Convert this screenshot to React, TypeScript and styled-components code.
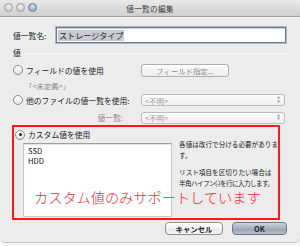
import styled, { createGlobalStyle } from 'styled-components';

const GlobalStyle = createGlobalStyle`
  html, body {
    margin: 0;
    padding: 0;
    background: #f6f6f6;
  }
  * {
    box-sizing: border-box;
  }
`;

const App = () => {
  return (
    <>
      <GlobalStyle />
      <Window>
        <TitleBar>
          <Lights>
            <Light />
            <Light />
            <Light $active />
          </Lights>
          <Title>値一覧の編集</Title>
        </TitleBar>
        <Body>
          <Row $top={10} $h={16}>
            <Label $w={43}>値一覧名:</Label>
            <NameInput>
              <Selected>ストレージタイプ</Selected>
            </NameInput>
          </Row>
          <Row $top={2} $h={14}>
            <Label $w={11}>値</Label>
            <Rule />
          </Row>
          <Row $top={4} $h={14}>
            <RadioLabel $w={128}>
              <Radio />
              フィールドの値を使用
            </RadioLabel>
            <PushButton>フィールド指定...</PushButton>
          </Row>
          <Row $top={1} $h={14}>
            <Undefined>「&lt;未定義&gt;」</Undefined>
          </Row>
          <Row $top={1} $h={14}>
            <RadioLabel $w={128}>
              <Radio />
              他のファイルの値一覧を使用:
            </RadioLabel>
            <Select>
              &lt;不明&gt;
              <Arrows>
                <span>▲</span>
                <span>▼</span>
              </Arrows>
            </Select>
          </Row>
          <Row $top={4} $h={13}>
            <Label $w={128} $dim $right>
              値一覧:
            </Label>
            <Select>
              &lt;不明&gt;
              <Arrows>
                <span>▲</span>
                <span>▼</span>
              </Arrows>
            </Select>
          </Row>
          <CustomBox>
            <RadioLabel $w={120}>
              <Radio $checked />
              カスタム値を使用
            </RadioLabel>
            <CustomBody>
              <ValueList>
                <div>SSD</div>
                <div>HDD</div>
              </ValueList>
              <Help>
                <HelpLine>各値は改行で分ける必要がありま</HelpLine>
                <HelpLine>す。</HelpLine>
                <HelpLine $gap>リスト項目を区切りたい場合は</HelpLine>
                <HelpLine $tight>半角ハイフン(-)を行に入力します。</HelpLine>
              </Help>
            </CustomBody>
            <Note>カスタム値のみサポートしています</Note>
          </CustomBox>
          <Footer>
            <Button $w={58}>キャンセル</Button>
            <Button $w={55} $primary>
              OK
            </Button>
          </Footer>
        </Body>
      </Window>
    </>
  );
};

export default App;

const Window = styled.div`
  width: 300px;
  height: 243px;
  background: #ececec;
  border-radius: 0 0 5px 5px;
  border-bottom: 1px solid #c4c4c4;
  overflow: hidden;
  font-family: 'Noto Sans CJK JP', 'Noto Sans', sans-serif;
  color: #1e1e1e;
  display: flex;
  flex-direction: column;
`;

const TitleBar = styled.div`
  position: relative;
  height: 17px;
  flex-shrink: 0;
  background: linear-gradient(#e9e9e9, #cfcfcf);
  border-bottom: 1px solid #a7a7a7;
  display: flex;
  align-items: center;
  justify-content: center;
`;

const Lights = styled.div`
  position: absolute;
  left: 4px;
  top: 3px;
  display: flex;
  gap: 3px;
`;

const Light = styled.div<{ $active?: boolean }>`
  width: 9px;
  height: 9px;
  border-radius: 50%;
  border: 1px solid ${(p) => (p.$active ? '#6f7f96' : '#9e9e9e')};
  background: ${(p) =>
    p.$active
      ? 'radial-gradient(circle at 50% 35%, #d6e0ee, #8396b4)'
      : 'radial-gradient(circle at 50% 35%, #f4f4f4, #bdbdbd)'};
`;

const Title = styled.div`
  font-size: 7.7px;
  color: #3c3c3c;
  letter-spacing: 0.2px;
`;

const Body = styled.div`
  display: flex;
  flex-direction: column;
  padding: 0 13px 0 13px;
  font-size: 7.8px;
`;

const Row = styled.div<{ $top: number; $h: number }>`
  display: flex;
  align-items: center;
  margin-top: ${(p) => p.$top}px;
  height: ${(p) => p.$h}px;
`;

const Label = styled.div<{ $w: number; $dim?: boolean; $right?: boolean }>`
  width: ${(p) => p.$w}px;
  flex-shrink: 0;
  color: ${(p) => (p.$dim ? '#8c8c8c' : '#1e1e1e')};
  text-align: ${(p) => (p.$right ? 'right' : 'left')};
  padding-right: ${(p) => (p.$right ? '18px' : '0')};
`;

const NameInput = styled.div`
  flex: 1;
  height: 16px;
  margin-right: 1px;
  background: #fff;
  border: 1px solid #6d7a8e;
  box-shadow: 0 0 0 1px #aab7c9, inset 0 1px 1px rgba(0, 0, 0, 0.2);
  display: flex;
  align-items: center;
  padding-left: 1px;
  font-size: 8.1px;
`;

const Selected = styled.span`
  background: #c9cbd0;
  padding: 0 1px;
  line-height: 11px;
`;

const Rule = styled.div`
  flex: 1;
  height: 1px;
  margin-top: 2px;
  background: #b3b3b3;
  border-bottom: 1px solid #f7f7f7;
`;

const RadioLabel = styled.div<{ $w: number }>`
  width: ${(p) => p.$w}px;
  flex-shrink: 0;
  display: flex;
  align-items: center;
  gap: 3px;
  white-space: nowrap;
`;

const Radio = styled.span<{ $checked?: boolean }>`
  width: 10px;
  height: 10px;
  flex-shrink: 0;
  border-radius: 50%;
  border: 1px solid #8b8b8b;
  background: linear-gradient(#ffffff, #e4e4e4);
  display: flex;
  align-items: center;
  justify-content: center;
  &::after {
    content: '';
    width: 3px;
    height: 3px;
    border-radius: 50%;
    background: #2a2a2a;
    display: ${(p) => (p.$checked ? 'block' : 'none')};
  }
`;

const PushButton = styled.div`
  width: 88px;
  height: 13px;
  border: 1px solid #b0b0b0;
  border-radius: 3px;
  background: linear-gradient(#fdfdfd, #ececec);
  color: #8f8f8f;
  font-size: 7.4px;
  display: flex;
  align-items: center;
  justify-content: center;
`;

const Undefined = styled.div`
  padding-left: 12px;
  color: #8c8c8c;
  font-size: 7.4px;
`;

const Select = styled.div`
  position: relative;
  width: 144px;
  height: 12px;
  border: 1px solid #bcbcbc;
  border-radius: 3px;
  background: linear-gradient(#fbfbfb, #f0f0f0);
  color: #9c9c9c;
  font-size: 7.4px;
  display: flex;
  align-items: center;
  padding-left: 3px;
`;

const Arrows = styled.div`
  position: absolute;
  right: 4px;
  top: 2px;
  display: flex;
  flex-direction: column;
  font-size: 3px;
  line-height: 3.5px;
  color: #a0a0a0;
`;

const CustomBox = styled.div`
  position: relative;
  margin: 1px 7px 0 -1px;
  height: 95px;
  border: 2px solid #ff1a1a;
  padding: 1px 0 0 1px;
  display: flex;
  flex-direction: column;
  & > ${RadioLabel} {
    height: 13px;
  }
`;

const CustomBody = styled.div`
  display: flex;
  gap: 7px;
  margin-top: 2px;
  padding-left: 8px;
`;

const ValueList = styled.div`
  width: 154px;
  height: 74px;
  background: #fff;
  border: 1px solid #c9c9c9;
  border-top-color: #9f9f9f;
  box-shadow: inset 0 1px 1px rgba(0, 0, 0, 0.12);
  padding: 2px 4px;
  font-size: 7.6px;
  line-height: 10px;
  color: #111;
`;

const Help = styled.div`
  flex: 1;
  margin-top: -4px;
  font-size: 6.6px;
  line-height: 11px;
  color: #222;
`;

const HelpLine = styled.div<{ $gap?: boolean; $tight?: boolean }>`
  white-space: nowrap;
  margin-top: ${(p) => (p.$gap ? '6px' : '0')};
  letter-spacing: ${(p) => (p.$tight ? '-0.6px' : '0')};
`;

const Note = styled.div`
  position: absolute;
  left: 20px;
  top: 63px;
  font-size: 14.2px;
  line-height: 14.2px;
  font-weight: 300;
  color: #ec2b35;
  white-space: nowrap;
`;

const Footer = styled.div`
  display: flex;
  justify-content: flex-end;
  gap: 9px;
  margin-top: 2px;
`;

const Button = styled.div<{ $w: number; $primary?: boolean }>`
  width: ${(p) => p.$w}px;
  height: 13px;
  border-radius: 4px;
  border: 1px solid ${(p) => (p.$primary ? '#6e7684' : '#8e8e8e')};
  background: ${(p) =>
    p.$primary
      ? 'linear-gradient(#cfd5dd, #a7afbb 50%, #9aa3b0 51%, #b6bdc7)'
      : 'linear-gradient(#ffffff, #f1f1f1 50%, #e6e6e6 51%, #f4f4f4)'};
  font-size: 7.4px;
  font-weight: 700;
  color: #262626;
  display: flex;
  align-items: center;
  justify-content: center;
`;
